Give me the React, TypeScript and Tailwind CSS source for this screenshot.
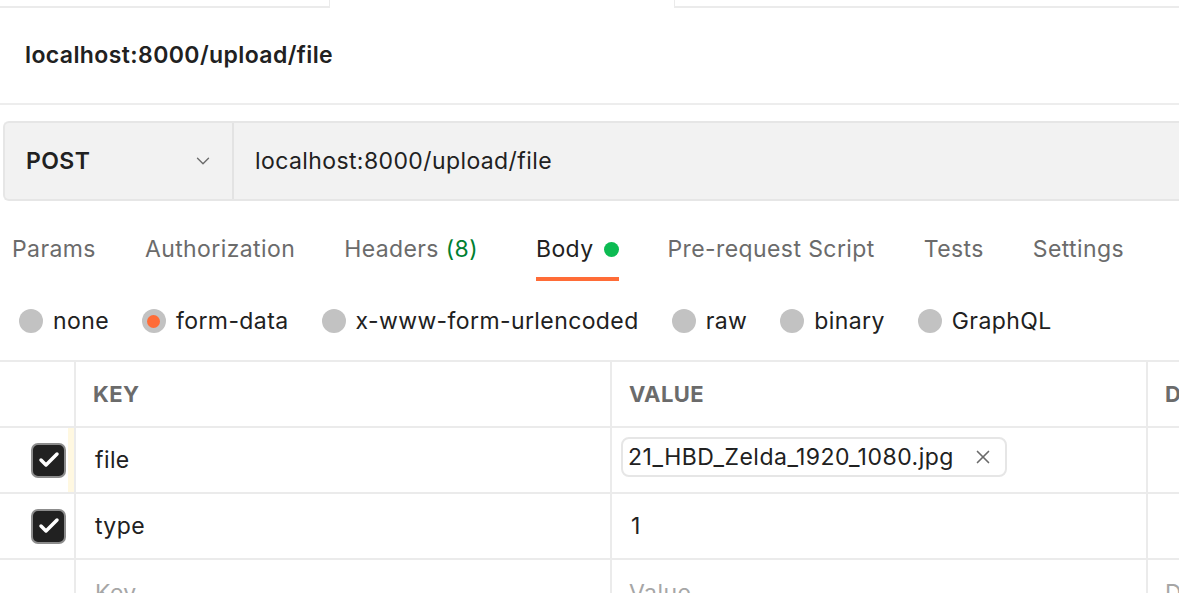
import { Check, ChevronDown, X } from "lucide-react";

const tabs = ["Params", "Authorization", "Headers", "Body", "Pre-request Script", "Tests", "Settings"];
const bodyTypes = ["none", "form-data", "x-www-form-urlencoded", "raw", "binary", "GraphQL"];

const rows = [
  { key: "file", value: "21_HBD_Zelda_1920_1080.jpg", isFile: true },
  { key: "type", value: "1", isFile: false },
];

const Checkbox = () => (
  <div className="w-[35px] h-[35px] rounded-[7px] bg-[#212121] border-2 border-[#8c8c8c] flex items-center justify-center">
    <Check size={24} strokeWidth={3.5} className="text-white" />
  </div>
);

const App = () => {
  return (
    <div
      className="w-[1179px] h-[593px] overflow-hidden bg-white text-[#212121] tracking-[0.4px]"
      style={{ fontFamily: "Inter, 'Noto Sans', sans-serif" }}
    >
      {/* tab strip edge */}
      <div className="flex h-[8px]">
        <div className="w-[330px] border-b-2 border-r border-[#ebebeb]" />
        <div className="w-[344px]" />
        <div className="flex-1 border-b-2 border-l border-[#ebebeb]" />
      </div>

      <div className="h-[95px] flex items-center pl-[25px] text-[23px] font-semibold">
        localhost:8000/upload/file
      </div>
      <div className="h-[2px] bg-[#ededed]" />

      {/* request bar */}
      <div className="mt-[16px] ml-[3px] h-[80px] flex bg-[#f2f2f2] border-2 border-r-0 border-[#e6e6e6] rounded-l-[6px]">
        <div className="w-[229px] flex items-center justify-between pl-[21px] pr-[18px] border-r-2 border-[#e3e3e3]">
          <span className="text-[23px] font-semibold">POST</span>
          <ChevronDown size={22} strokeWidth={1.5} className="text-[#6b6b6b]" />
        </div>
        <div className="flex items-center pl-[21px] text-[23px]">localhost:8000/upload/file</div>
      </div>

      {/* tabs */}
      <div className="h-[80px] flex items-stretch gap-[49px] pl-[12px]">
        {tabs.map((t) => (
          <div
            key={t}
            className={`flex items-center gap-[10px] pt-[20px] text-[23px] border-b-4 ${
              t === "Body" ? "ml-[9px] border-[#ff6c37] text-[#212121]" : "border-transparent text-[#6b6b6b]"
            }`}
          >
            <span>
              {t}
              {t === "Headers" && <span className="text-[#007f31]"> (8)</span>}
            </span>
            {t === "Body" && <span className="w-[15px] h-[15px] rounded-full bg-[#0cbb52]" />}
          </div>
        ))}
      </div>

      {/* body types */}
      <div className="h-[80px] flex items-center gap-[33px] pl-[19px]">
        {bodyTypes.map((b) => (
          <div key={b} className="flex items-center gap-[10px] text-[23px]">
            <span className="w-[24px] h-[24px] rounded-full bg-[#c2c2c2] flex items-center justify-center">
              {b === "form-data" && <span className="w-[13px] h-[13px] rounded-full bg-[#ff6c37]" />}
            </span>
            <span>{b}</span>
          </div>
        ))}
      </div>

      {/* table */}
      <div className="border-t-2 border-[#ebebeb] -mt-[1px]">
        <div className="grid grid-cols-[76px_536px_536px_1fr] h-[66px] border-b-2 border-[#ebebeb] text-[22px] font-bold text-[#6b6b6b]">
          <div className="border-r-2 border-[#ebebeb]" />
          <div className="flex items-center pl-[17px] border-r-2 border-[#ebebeb]">KEY</div>
          <div className="flex items-center pl-[17px] border-r-2 border-[#ebebeb]">VALUE</div>
          <div className="flex items-center pl-[17px]">DESCRIPTION</div>
        </div>
        {rows.map((r, i) => (
          <div key={r.key} className="grid grid-cols-[76px_536px_536px_1fr] h-[66px] border-b-2 border-[#ebebeb] text-[23px]">
            <div className="flex items-stretch justify-end border-r-2 border-[#ebebeb]">
              <div className="flex items-center pr-[2px]">
                <Checkbox />
              </div>
              <div className={`w-[6px] ${i === 0 ? "bg-[#fff8e1]" : ""}`} />
            </div>
            <div className="flex items-center pl-[19px] border-r-2 border-[#ebebeb]">{r.key}</div>
            <div className="flex items-center pl-[9px] border-r-2 border-[#ebebeb]">
              {r.isFile ? (
                <div className="h-[40px] mb-[6px] flex items-center gap-[18px] pl-[5px] pr-[11px] border-2 border-[#e6e6e6] rounded-[8px]">
                  <span className="tracking-[0.5px]">{r.value}</span>
                  <X size={22} strokeWidth={1.8} className="text-[#6b6b6b]" />
                </div>
              ) : (
                <span className="pl-[10px]">{r.value}</span>
              )}
            </div>
            <div />
          </div>
        ))}
        <div className="grid grid-cols-[76px_536px_536px_1fr] h-[66px] text-[23px] text-[#a6a6a6]">
          <div className="border-r-2 border-[#ebebeb]" />
          <div className="flex items-center pl-[19px] border-r-2 border-[#ebebeb]">Key</div>
          <div className="flex items-center pl-[17px] border-r-2 border-[#ebebeb]">Value</div>
          <div className="flex items-center pl-[17px]">Description</div>
        </div>
      </div>
    </div>
  );
};

export default App;
